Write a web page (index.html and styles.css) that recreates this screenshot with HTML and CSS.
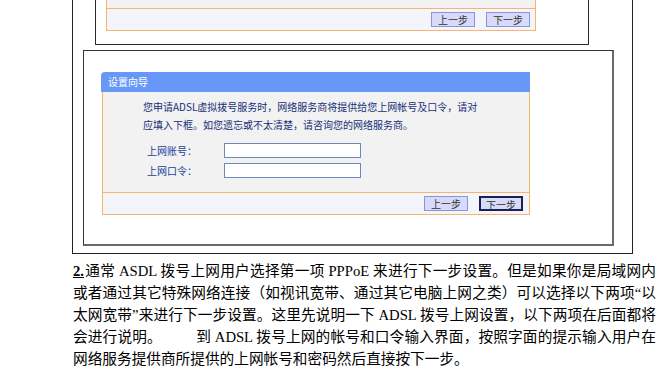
FILE: index.html
```html
<!DOCTYPE html>
<html lang="zh-CN">
<head>
    <meta charset="UTF-8">
    <meta name="viewport" content="width=device-width, initial-scale=1.0">
    <title>ADSL 设置向导</title>
    <link rel="stylesheet" href="styles.css">
</head>
<body>
    <!-- Screenshot frame -->
    <div class="figure">
        <!-- previous screenshot, only its bottom edge is in view -->
        <div class="shot shot-prev">
            <div class="wizard">
                <div class="wizard-body wizard-body-cut"></div>
                <div class="wizard-foot">
                    <button class="btn">上一步</button>
                    <button class="btn">下一步</button>
                </div>
            </div>
        </div>

        <div class="shot shot-main">
            <div class="wizard-title">设置向导</div>
            <div class="wizard">
                <div class="wizard-body">
                    <p class="wizard-info">您申请ADSL虚拟拨号服务时，网络服务商将提供给您上网帐号及口令，请对<br>应填入下框。如您遗忘或不太清楚，请咨询您的网络服务商。</p>
                    <div class="field">
                        <label>上网账号：</label>
                        <input type="text">
                    </div>
                    <div class="field">
                        <label>上网口令：</label>
                        <input type="password">
                    </div>
                </div>
                <div class="wizard-foot">
                    <button class="btn">上一步</button>
                    <button class="btn btn-focus">下一步</button>
                </div>
            </div>
        </div>
    </div>

    <p class="step"><span class="step-num">2.</span>通常 ASDL 拨号上网用户选择第一项 PPPoE 来进行下一步设置。但是如果你是局域网内或者通过其它特殊网络连接（如视讯宽带、通过其它电脑上网之类）可以选择以下两项“以太网宽带”来进行下一步设置。这里先说明一下 ADSL 拨号上网设置，以下两项在后面都将会进行说明。&nbsp;&nbsp;&nbsp;&nbsp;&nbsp;&nbsp;&nbsp;&nbsp; 到 ADSL 拨号上网的帐号和口令输入界面，按照字面的提示输入用户在网络服务提供商所提供的上网帐号和密码然后直接按下一步。</p>
</body>
</html>
```

FILE: styles.css
```css
body {
    margin: 0;
    background: #fff;
    font-family: "Noto Sans CJK SC", sans-serif;
}

/* Frame around the screenshots */
.figure {
    width: 561px;
    margin-left: 72px;
    padding-bottom: 7px;
    border: 1px solid #222;
    border-top: none;
    box-sizing: border-box;
}

.shot {
    background: #fff;
    box-sizing: border-box;
}

.shot-prev {
    width: 494px;
    margin-left: 22px;
    padding: 0 52px 13px 10px;
    border: 1px solid #2a2a2a;
    border-top: none;
}

.shot-main {
    width: 531px;
    margin: 5px 0 0 10px;
    padding: 21px 82px 29px 18px;
    border: 1px solid #333;
    border-right: 2px solid #6a6a6a;
    border-bottom: 2px solid #6a6a6a;
}

/* Router wizard panel */
.wizard-title {
    height: 20px;
    margin-left: -1px;
    padding-left: 7px;
    background: #6797f7;
    border-radius: 4px 0 0 0;
    color: #fff;
    font-size: 10px;
    line-height: 20px;
}

.wizard {
    border: 1px solid #f6b46c;
    border-top: none;
    background: #f2f2f2;
}

.wizard-body {
    height: 100px;
    padding: 6px 0 0 40px;
    box-sizing: border-box;
}

.wizard-body-cut {
    height: 8px;
    padding: 0;
}

.wizard-info {
    margin: 0 0 6px;
    color: #162f78;
    font-size: 10px;
    line-height: 18px;
}

.field {
    display: flex;
    align-items: center;
    height: 20px;
    padding-left: 4px;
}

.field label {
    width: 77px;
    color: #22409a;
    font-size: 10px;
}

.field input {
    width: 137px;
    height: 15px;
    margin: 0;
    padding: 0;
    border: 1px solid #6f86c0;
    background: #fff;
    box-sizing: border-box;
}

.wizard-foot {
    display: flex;
    justify-content: flex-end;
    align-items: center;
    gap: 11px;
    height: 22px;
    padding: 0 6px 0 0;
    border-top: 1px solid #f6b46c;
    background: #f4f5fa;
    box-sizing: border-box;
}

.shot-prev .wizard-foot {
    padding-right: 5px;
}

.btn {
    width: 44px;
    height: 15px;
    padding: 0;
    border: 1px solid #8a96d6;
    background: #d7dbf9;
    color: #333;
    font-family: "Noto Sans CJK SC", sans-serif;
    font-size: 10px;
    line-height: 13px;
    box-sizing: border-box;
}

.btn-focus {
    border: 2px solid #1b1f55;
}

/* Article text under the picture */
.step {
    width: 583px;
    margin: 6px 0 0 73px;
    color: #000;
    font-family: "Liberation Serif", "Noto Sans CJK SC", serif;
    font-size: 14.67px;
    line-height: 22px;
    text-align: justify;
}

.step-num {
    margin-right: 1px;
    font-weight: bold;
    text-decoration: underline;
}
```
